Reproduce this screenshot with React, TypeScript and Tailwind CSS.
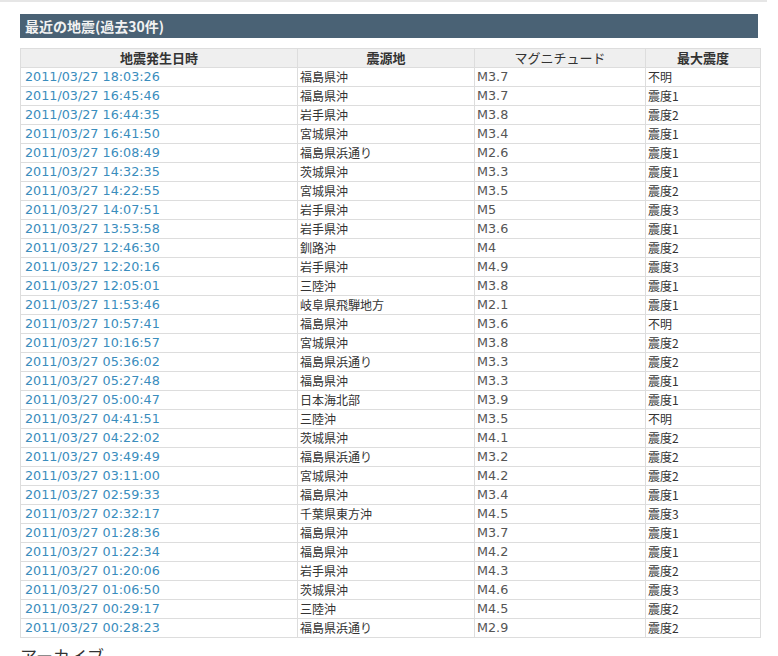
// Recent quakes list — 最近の地震(過去30件)
const rows: [string, string, string, string][] = [
  ["2011/03/27 18:03:26", "福島県沖", "M3.7", "不明"],
  ["2011/03/27 16:45:46", "福島県沖", "M3.7", "震度1"],
  ["2011/03/27 16:44:35", "岩手県沖", "M3.8", "震度2"],
  ["2011/03/27 16:41:50", "宮城県沖", "M3.4", "震度1"],
  ["2011/03/27 16:08:49", "福島県浜通り", "M2.6", "震度1"],
  ["2011/03/27 14:32:35", "茨城県沖", "M3.3", "震度1"],
  ["2011/03/27 14:22:55", "宮城県沖", "M3.5", "震度2"],
  ["2011/03/27 14:07:51", "岩手県沖", "M5", "震度3"],
  ["2011/03/27 13:53:58", "岩手県沖", "M3.6", "震度1"],
  ["2011/03/27 12:46:30", "釧路沖", "M4", "震度2"],
  ["2011/03/27 12:20:16", "岩手県沖", "M4.9", "震度3"],
  ["2011/03/27 12:05:01", "三陸沖", "M3.8", "震度1"],
  ["2011/03/27 11:53:46", "岐阜県飛騨地方", "M2.1", "震度1"],
  ["2011/03/27 10:57:41", "福島県沖", "M3.6", "不明"],
  ["2011/03/27 10:16:57", "宮城県沖", "M3.8", "震度2"],
  ["2011/03/27 05:36:02", "福島県浜通り", "M3.3", "震度2"],
  ["2011/03/27 05:27:48", "福島県沖", "M3.3", "震度1"],
  ["2011/03/27 05:00:47", "日本海北部", "M3.9", "震度1"],
  ["2011/03/27 04:41:51", "三陸沖", "M3.5", "不明"],
  ["2011/03/27 04:22:02", "茨城県沖", "M4.1", "震度2"],
  ["2011/03/27 03:49:49", "福島県浜通り", "M3.2", "震度2"],
  ["2011/03/27 03:11:00", "宮城県沖", "M4.2", "震度2"],
  ["2011/03/27 02:59:33", "福島県沖", "M3.4", "震度1"],
  ["2011/03/27 02:32:17", "千葉県東方沖", "M4.5", "震度3"],
  ["2011/03/27 01:28:36", "福島県沖", "M3.7", "震度1"],
  ["2011/03/27 01:22:34", "福島県沖", "M4.2", "震度1"],
  ["2011/03/27 01:20:06", "岩手県沖", "M4.3", "震度2"],
  ["2011/03/27 01:06:50", "茨城県沖", "M4.6", "震度3"],
  ["2011/03/27 00:29:17", "三陸沖", "M4.5", "震度2"],
  ["2011/03/27 00:28:23", "福島県浜通り", "M2.9", "震度2"],
];

const th =
  "border border-[#dddddd] bg-[#efefef] p-0 text-center font-['Noto_Sans_CJK_JP',sans-serif] text-[13px] font-bold leading-[18px] text-[#333333]";
const td = "border border-[#dddddd] py-0 leading-[18px] align-middle";

export default function App() {
  return (
    <div className="min-h-screen bg-white font-['DejaVu_Sans','Noto_Sans_CJK_JP',sans-serif]">
      <div className="h-[2px] w-[767px] bg-[#e6e6e6]" />
      <div className="px-5 pt-3">
        <h2 className="flex h-6 w-[738px] items-center bg-[#4a6275] px-[5px] font-['Noto_Sans_CJK_JP',sans-serif] text-[14px] font-bold text-[#f2f2f2]">
          最近の地震(過去30件)
        </h2>
        <table className="mt-[10px] w-[740px] table-fixed border-collapse bg-white">
          <colgroup>
            <col className="w-[277px]" />
            <col className="w-[177px]" />
            <col className="w-[171px]" />
            <col className="w-[115px]" />
          </colgroup>
          <thead>
            <tr>
              <th className={th}>地震発生日時</th>
              <th className={th}>震源地</th>
              <th className={th + " font-normal"}>マグニチュード</th>
              <th className={th}>最大震度</th>
            </tr>
          </thead>
          <tbody>
            {rows.map(([time, place, mag, shindo]) => (
              <tr key={time}>
                <td className={td + " pl-[4px] text-[12.75px] text-[#3a8dbd]"}>
                  <a href="#">{time}</a>
                </td>
                <td className={td + " pl-[2px] font-['Noto_Sans_CJK_JP',sans-serif] text-[12px] text-[#333333]"}>
                  {place}
                </td>
                <td className={td + " pl-[2px] text-[12.75px] text-[#555555]"}>{mag}</td>
                <td className={td + " pl-[2px] font-['Noto_Sans_CJK_JP',sans-serif] text-[12px] text-[#333333]"}>
                  {shindo}
                </td>
              </tr>
            ))}
          </tbody>
        </table>
        <h3 className="mt-[6px] font-['Noto_Sans_CJK_JP',sans-serif] text-[17px] leading-6 text-[#333333]">
          アーカイブ
        </h3>
      </div>
    </div>
  );
}
